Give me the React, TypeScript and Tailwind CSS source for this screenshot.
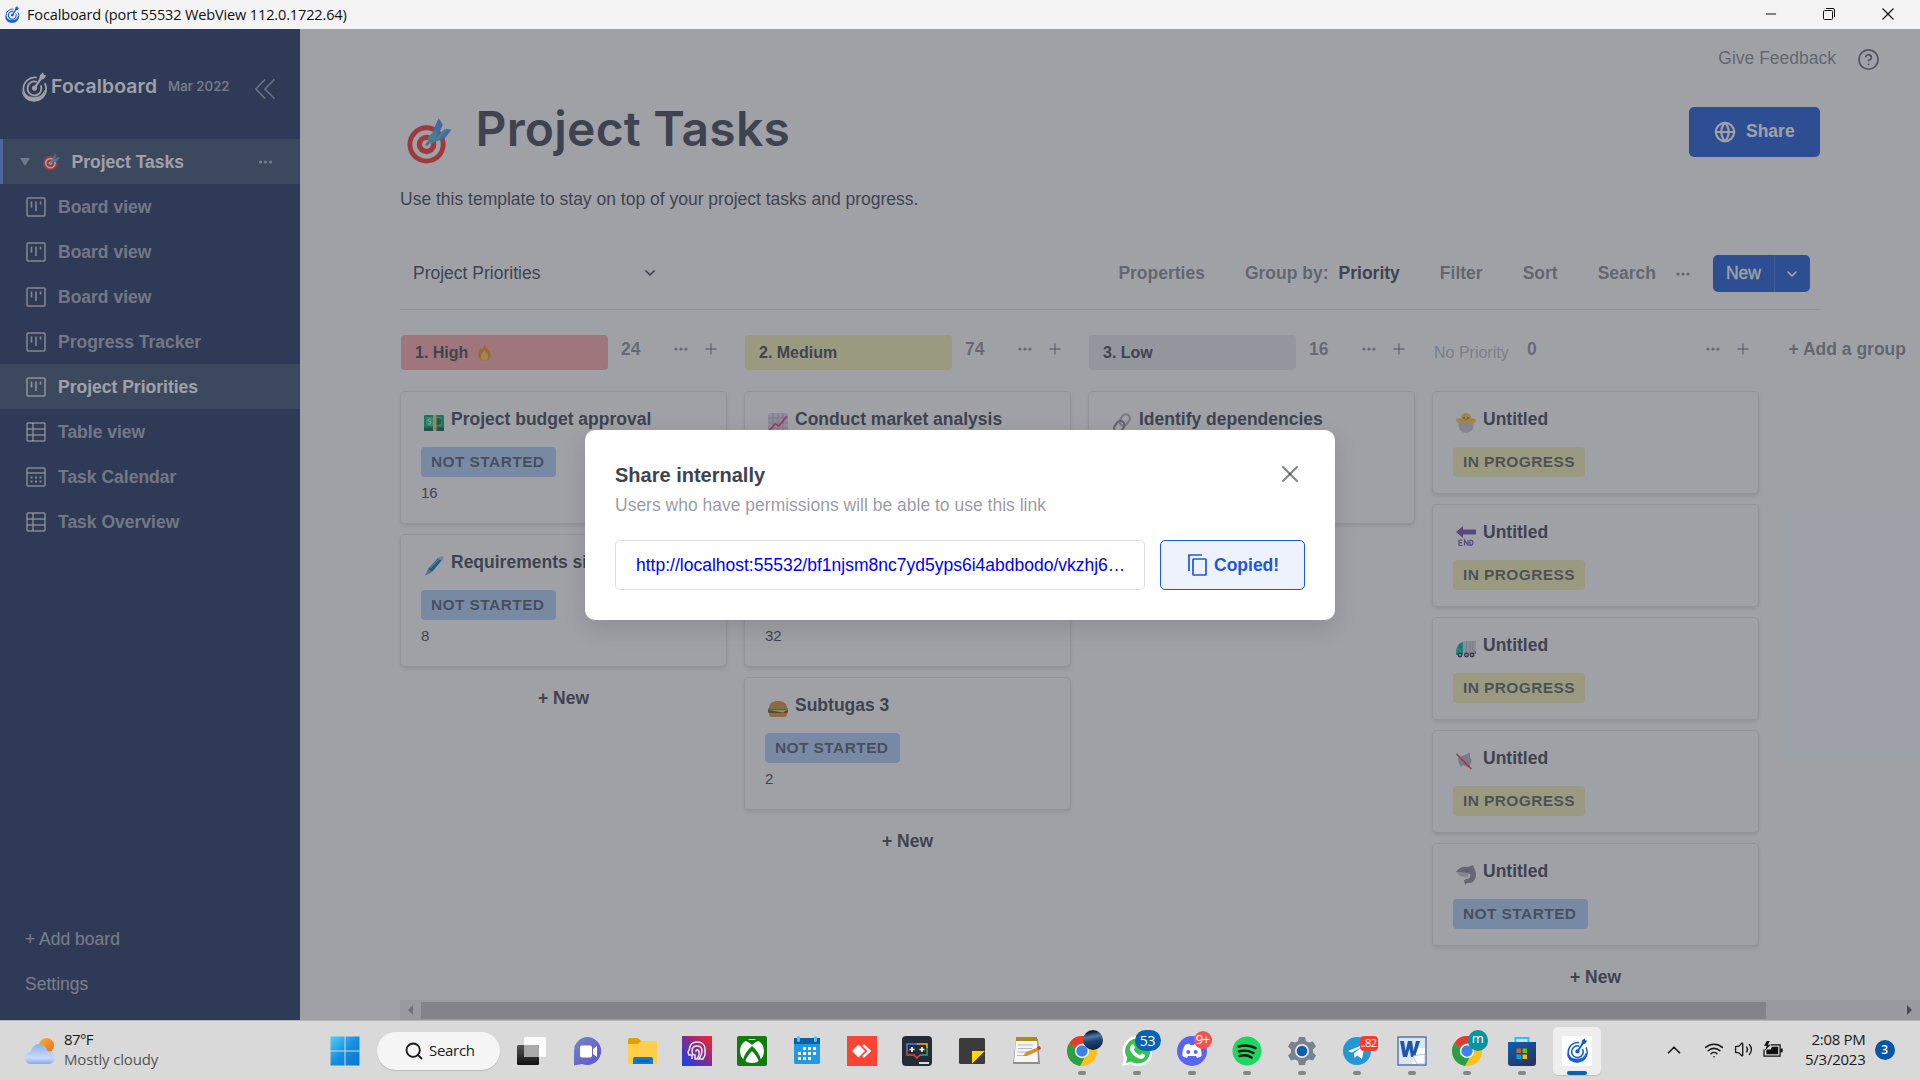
import React from "react";
import { HelpCircle, ChevronDown, ChevronUp, Globe, Search, Wifi, Volume2, X, Minus } from "lucide-react";

type IconProps = { className?: string };

function BrandMark({ className }: IconProps) {
  return (
    <svg viewBox="0 0 24 28" className={className} fill="none" stroke="currentColor">
      <path d="M14.500 5.200A10.600 10.600 0 1 0 22 10.500" strokeWidth="1.600" />
      <path d="M.6 15.500a11.500 11.500 0 0 0 22.900 0c.5 7.400-4.800 12.200-11.500 12.200S.1 22.800.6 15.500Z" fill="currentColor" stroke="none" />
      <path d="M2 17a10 8.500 0 0 0 20 0a10.500 9.500 0 0 1-20 0Z" fill="currentColor" strokeWidth=".6" />
      <path d="M14.600 9.200a6.500 6.500 0 1 0 3.700 3.300" strokeWidth="1.700" />
      <circle cx="12.500" cy="15" r="2.400" fill="currentColor" stroke="none" />
      <path d="M12.500 15 18.500 6" strokeWidth="2" />
      <path d="M17 7.500 17.500 3 20.500.200 21.200 2.600 23.500 3.200 21 6.500Z" fill="currentColor" stroke="none" />
    </svg>
  );
}

function DartEmoji({ className }: IconProps) {
  return (
    <svg viewBox="0 0 45 48" className={className}>
      <circle cx="19.500" cy="27" r="19.500" fill="#f8312f" />
      <circle cx="19.500" cy="27" r="14.500" fill="#fff" />
      <circle cx="19.500" cy="27" r="10" fill="#f8312f" />
      <circle cx="19.500" cy="27" r="4.500" fill="#fff" />
      <path d="m19 28 6-7" stroke="#7d8590" strokeWidth="2.500" />
      <path d="M27 11 32 0l4 7-5 12 9-8 5 1-7 9-9 3Z" fill="#4a90e6" />
      <path d="m21 20 7-8 3 3-2 5 9-9 2 2-9 10-6 3c-3 1-5-3-4-6Z" fill="#4fb9d8" />
    </svg>
  );
}

function BoardIcon({ className }: IconProps) {
  return (
    <svg viewBox="0 0 20 20" className={className} fill="none" stroke="currentColor" strokeWidth="1.500">
      <rect x="1" y="1" width="18" height="18" rx="1" />
      <path d="M5.500 4.500v6M10 4.500v9.500M14.500 4.500v3" strokeWidth="1.600" />
    </svg>
  );
}

function TableIcon({ className }: IconProps) {
  return (
    <svg viewBox="0 0 20 20" className={className} fill="none" stroke="currentColor" strokeWidth="1.500">
      <rect x="1" y="1" width="18" height="18" rx="1" />
      <path d="M7 1v18M1 7h18M1 13h18" />
    </svg>
  );
}

function CalendarIcon({ className }: IconProps) {
  return (
    <svg viewBox="0 0 20 20" className={className} fill="none" stroke="currentColor" strokeWidth="1.500">
      <rect x="1" y="1" width="18" height="18" rx="1" />
      <path d="M1 6h18" />
      <path d="M4.500 10.500h2M9 10.500h2M13.500 10.500h2M4.500 14.500h2M9 14.500h2M13.500 14.500h2" strokeWidth="2" />
    </svg>
  );
}

function Dots({ className }: IconProps) {
  return (
    <svg viewBox="0 0 14 4" className={className} fill="currentColor">
      <circle cx="2" cy="2" r="1.600" />
      <circle cx="7" cy="2" r="1.600" />
      <circle cx="12" cy="2" r="1.600" />
    </svg>
  );
}

function PlusThin({ className }: IconProps) {
  return (
    <svg viewBox="0 0 12 12" className={className} fill="none" stroke="currentColor" strokeWidth="1.300">
      <path d="M6 .500v11M.500 6h11" />
    </svg>
  );
}

/* ---------- card emoji ---------- */

function Emoji({ name }: { name: string }) {
  const c = "w-[20px] h-[20px] shrink-0";
  switch (name) {
    case "money":
      return (
        <svg viewBox="0 0 20 20" className={c}>
          <rect y="2" width="20" height="16" rx="1" fill="#00a86b" />
          <rect y="14.500" width="20" height="3.500" fill="#0d5e45" />
          <rect x="2" y="4" width="16" height="9" rx="2" fill="#17d492" />
          <circle cx="14" cy="8.500" r="3.500" fill="#0d6e50" />
          <path d="M6.500 6c-3-.5-3 2.500-.8 2.500S7.500 11.500 4 11" stroke="#fff" fill="none" />
          <rect x="9" y="2" width="3.500" height="16" fill="#f5c96b" />
        </svg>
      );
    case "pen":
      return (
        <svg viewBox="0 0 20 20" className={c}>
          <path d="M4 13 14 2l4 2L8 16Z" fill="#0074ba" />
          <path d="m14 2 3-2 3 1-2 4Z" fill="#b8c4d0" />
          <path d="m6 12 9-9" stroke="#6ec2f5" strokeWidth="1.100" />
          <path d="M4 13 8 16 1 20Z" fill="#8c95a3" />
        </svg>
      );
    case "chart":
      return (
        <svg viewBox="0 0 20 20" className={c}>
          <rect width="20" height="20" rx="2" fill="#e1d8ec" />
          <path d="M5 0v20M10 0v20M15 0v20M0 5h20M0 10h20M0 15h20" stroke="#bda9d6" strokeWidth="1" />
          <path d="M1 18 7 11l4 2L19 3" fill="none" stroke="#f82f60" strokeWidth="1.700" />
        </svg>
      );
    case "burger":
      return (
        <svg viewBox="0 0 20 20" className={c}>
          <path d="M1 9C1 4 5 2 10 2s9 2 9 7Z" fill="#e98b2e" />
          <rect y="9" width="20" height="2" fill="#7dbb42" />
          <rect y="10.500" width="20" height="3.500" rx="1.500" fill="#7d4533" />
          <path d="M1 11h18l-4 2.500Z" fill="#ffcf45" />
          <path d="M1 14h18c0 3-1 4-3 4H4c-2 0-3-1-3-4Z" fill="#e98b2e" />
        </svg>
      );
    case "link":
      return (
        <svg viewBox="0 0 20 20" className={c} fill="none" strokeWidth="2.200">
          <rect x="8.500" y=".500" width="8" height="12" rx="4" transform="rotate(35 12 7)" stroke="#b3b3b8" />
          <rect x="3" y="7.500" width="8" height="12" rx="4" transform="rotate(35 7 14)" stroke="#858289" />
        </svg>
      );
    case "chick":
      return (
        <svg viewBox="0 0 20 20" className={c}>
          <path d="M2.500 9h15c1 7-3 11-7.500 11s-8.500-4-7.500-11Z" fill="#c9c6ce" />
          <path d="M5 5C5 2 7 0 10 0s5 2 5 5l5 1c0 3-2 4-4 4l-3-1-3 3-3-3-3 1c-2 0-4-1-4-4Z" fill="#ffc83d" />
          <circle cx="8" cy="5" r=".8" fill="#402a32" />
          <circle cx="12" cy="5" r=".8" fill="#402a32" />
          <path d="M9 6h2l-1 1.500Z" fill="#f8312f" />
        </svg>
      );
    case "end":
      return (
        <svg viewBox="0 0 20 20" className={c}>
          <path d="M0 6 7 0v3.500h13v5H7V12Z" fill="#6f4fb0" />
          <path d="M6.500 14H3v5.500h3.500M3 16.700h3M8.500 19.500V14l3.500 5.500V14M14 14v5.500c4 0 4-5.500 0-5.500Z" fill="none" stroke="#6f4fb0" strokeWidth="1.200" />
        </svg>
      );
    case "truck":
      return (
        <svg viewBox="0 0 20 20" className={c}>
          <rect x="7" y="2" width="13" height="13" rx="1" fill="#d9d9de" />
          <path d="M10.500 2v12M14 2v12M17 2v12" stroke="#a9a9b2" strokeWidth=".8" />
          <path d="M0 14c0-5 2-10 7-11v13H0Z" fill="#00c68a" />
          <path d="M2 9c.5-2.500 1.500-4 4-4.500V9Z" fill="#2d7fd0" />
          <circle cx="4" cy="16" r="1.800" fill="#c8c8cc" stroke="#321b41" strokeWidth="1.300" />
          <circle cx="10.500" cy="16" r="1.800" fill="#c8c8cc" stroke="#321b41" strokeWidth="1.300" />
          <circle cx="16" cy="16" r="1.800" fill="#c8c8cc" stroke="#321b41" strokeWidth="1.300" />
          <rect x="18.800" y="12" width="1.200" height="3" fill="#f8312f" />
        </svg>
      );
    case "mute":
      return (
        <svg viewBox="0 0 20 20" className={c}>
          <path d="M2 7c0-1 1-2 2-2l9-4h1v5c2 .5 2 5 0 6v4h-1l-6-3-2 2-2-3Z" fill="#bbadc9" />
          <path d="m.500 2 15 15" stroke="#f8312f" strokeWidth="1.500" />
        </svg>
      );
    default:
      return (
        <svg viewBox="0 0 20 20" className={c}>
          <path d="M0 7c3-5 8-6 12-5l5-2 1 3c3 5 3 12-3 15l-4 0-2 2-1-5 2-1c4 0 5-3 4-5Z" fill="#8d8a92" />
          <path d="M1 8c4-1 8-1 10 0 2 2 1 4-1 4-4 0-7-1-9-4Z" fill="#c8c6cc" />
          <path d="M10 4v3M12 4v3" stroke="#5b5861" strokeWidth=".8" />
        </svg>
      );
  }
}

function Fire() {
  return (
    <svg viewBox="0 0 14 18" className="ml-[10px] h-[17px] w-[13px]">
      <path d="M7 0c1 4 6 6 6.500 11 .3 5-3 7-6.500 7S0 16 .5 11C.7 8 2 7 2.500 4 4 5 4.500 6 4.500 6 6 4 7 2 7 0Z" fill="#ff822d" />
      <path d="M7 6c1 3 4 4 4 8 0 2-2 4-4 4s-4-2-4-4c0-4 3-5 4-8Z" fill="#ffce43" />
    </svg>
  );
}

/* ---------- sidebar ---------- */

const views = [
  { label: "Board view", Icon: BoardIcon },
  { label: "Board view", Icon: BoardIcon },
  { label: "Board view", Icon: BoardIcon },
  { label: "Progress Tracker", Icon: BoardIcon },
  { label: "Project Priorities", Icon: BoardIcon, active: true },
  { label: "Table view", Icon: TableIcon },
  { label: "Task Calendar", Icon: CalendarIcon },
  { label: "Task Overview", Icon: TableIcon },
];

function Sidebar() {
  return (
    <aside className="flex w-[300px] shrink-0 flex-col bg-[#1e325c] pb-[13px] text-[17.5px] text-white">
      <div className="flex h-[110px] items-center pl-[21px]">
        <BrandMark className="mt-[5px] h-[30px] w-[26px]" />
        <span className="ml-[4px] mt-[6px] w-[106px] font-['Inter'] text-[19.300px] font-semibold leading-none tracking-[0.2px]">Focalboard</span>
        <span className="ml-[11px] mt-[6px] w-[61px] whitespace-nowrap font-['Inter'] text-[13.300px] font-medium leading-none text-white/65">Mar 2022</span>
        <svg viewBox="0 0 20 20" className="ml-[26px] mt-[10px] h-[20px] w-[20px] text-white/55" fill="none" stroke="currentColor" strokeWidth="1.500">
          <path d="M10 .500.800 10l9.200 9.500M19.300.500 10 10l9.300 9.500" />
        </svg>
      </div>
      <div className="flex h-[45px] items-center border-l-[3px] border-[#5d89ea] bg-[#384d6b] pl-[17px] font-bold">
        <svg viewBox="0 0 10 8" className="h-[8px] w-[10px] text-white/55">
          <path d="M0 0h10L5 8Z" fill="currentColor" />
        </svg>
        <DartEmoji className="ml-[13px] h-[18px] w-[17px]" />
        <span className="ml-[11.500px] mt-[2px]">Project Tasks</span>
        <Dots className="ml-auto mr-[27px] h-[4px] w-[15px] text-white/60" />
      </div>
      {views.map(({ label, Icon, active }, i) => (
        <div
          key={i}
          className={
            active
              ? "flex h-[45px] items-center bg-[#384d6b] pl-[26px] font-bold"
              : "flex h-[45px] items-center pl-[26px] font-bold text-white/60"
          }
        >
          <Icon className={active ? "h-[20px] w-[20px] text-white/80" : "h-[20px] w-[20px] text-white/75"} />
          <span className="ml-[12px] mt-[2px]">{label}</span>
        </div>
      ))}
      <div className="mt-auto flex h-[45px] items-center pl-[25px] text-white/65">+ Add board</div>
      <div className="flex h-[45px] items-center pl-[25px] text-white/65">Settings</div>
    </aside>
  );
}

/* ---------- board ---------- */

type Card = { emoji: string; title: string; status: "NOT STARTED" | "IN PROGRESS"; num?: string };
type Column = { name: string; count: string; chip?: string; fire?: boolean; cards: Card[] };

const columns: Column[] = [
  {
    name: "1. High",
    count: "24",
    chip: "bg-[#ffa9a9]",
    fire: true,
    cards: [
      { emoji: "money", title: "Project budget approval", status: "NOT STARTED", num: "16" },
      { emoji: "pen", title: "Requirements si", status: "NOT STARTED", num: "8" },
    ],
  },
  {
    name: "2. Medium",
    count: "74",
    chip: "bg-[#f5f1b0]",
    cards: [
      { emoji: "chart", title: "Conduct market analysis", status: "NOT STARTED", num: "" },
      { emoji: "chart", title: "", status: "NOT STARTED", num: "32" },
      { emoji: "burger", title: "Subtugas 3", status: "NOT STARTED", num: "2" },
    ],
  },
  {
    name: "3. Low",
    count: "16",
    chip: "bg-[#e9e9ea]",
    cards: [{ emoji: "link", title: "Identify dependencies", status: "NOT STARTED", num: "" }],
  },
  {
    name: "No Priority",
    count: "0",
    cards: [
      { emoji: "chick", title: "Untitled", status: "IN PROGRESS" },
      { emoji: "end", title: "Untitled", status: "IN PROGRESS" },
      { emoji: "truck", title: "Untitled", status: "IN PROGRESS" },
      { emoji: "mute", title: "Untitled", status: "IN PROGRESS" },
      { emoji: "shark", title: "Untitled", status: "NOT STARTED" },
    ],
  },
];

function CardView({ card }: { card: Card }) {
  return (
    <div
      className={
        (card.num !== undefined ? "h-[133px] " : "h-[103px] ") +
        "mb-[10px] flex w-[327px] flex-col items-start rounded-[5px] border border-[#e3e4e6] bg-white pl-[20px] pt-[16px] shadow-[0_2px_4px_rgba(0,0,0,0.12)]"
      }
    >
      <div className="flex h-[24px] items-center whitespace-nowrap text-[17.5px] font-bold">
        <span className="mt-[5px] flex w-[30px] pl-[2.500px]">
          <Emoji name={card.emoji} />
        </span>
        <span className="-mt-[1px]">{card.title}</span>
      </div>
      <span
        className={
          (card.status === "NOT STARTED" ? "w-[134.500px] bg-[#b1d1f6] " : "w-[132px] bg-[#f5f1b0] ") +
          "mt-[15px] flex h-[30px] items-center whitespace-nowrap rounded-[4px] pl-[10px] text-[15.500px] font-bold tracking-[0.400px] text-[#3f4350]/85"
        }
      >
        {card.status}
      </span>
      {card.num && <span className="mt-[6px] text-[15px] leading-[20px]">{card.num}</span>}
    </div>
  );
}

function ColumnView({ col }: { col: Column }) {
  return (
    <section className="w-[344px] shrink-0">
      <div className="flex h-[56px] items-start">
        {col.chip ? (
          <div className={col.chip + " ml-px flex h-[35px] w-[207px] items-center rounded-[4px] pl-[14px] text-[16px] font-bold"}>
            {col.name}
            {col.fire && <Fire />}
          </div>
        ) : (
          <div className="ml-[2px] flex h-[35px] w-[80px] items-center whitespace-nowrap text-[16px] text-[#3f4350]/40">{col.name}</div>
        )}
        <div className="flex h-[28px] flex-1 items-center text-[#3f4350]/60">
          <span className="ml-[13px] text-[17.5px] font-bold">{col.count}</span>
          <Dots className="ml-auto h-[4px] w-[14px]" />
          <PlusThin className="ml-[17px] mr-[27px] h-[12px] w-[12px]" />
        </div>
      </div>
      {col.cards.map((c, i) => (
        <CardView key={i} card={c} />
      ))}
      {col.cards.length !== 1 && (
        <div className="flex h-[42px] w-[327px] items-center justify-center text-[17.5px] font-bold">+ New</div>
      )}
    </section>
  );
}

function Main() {
  return (
    <main className="flex min-w-0 flex-1 flex-col bg-white text-[17.5px] text-[#3f4350]">
      <div className="flex h-[60px] items-center justify-end pr-[40px]">
        <span className="-mt-[2px] text-[#3f4350]/65">Give Feedback</span>
        <HelpCircle className="ml-[21px] h-[23px] w-[23px] text-[#3f4350]/80" strokeWidth={1.900} />
      </div>
      <div className="flex h-[220px] pl-[100px] pr-[100px]">
        <div className="flex-1">
          <div className="flex h-[80px]">
            <DartEmoji className="ml-[7px] mt-[29px] h-[47px] w-[45px]" />
            <h1 className="ml-[23.500px] mt-[11px] whitespace-nowrap font-['Inter'] text-[48px] font-semibold leading-[58px] tracking-[0.200px]">Project Tasks</h1>
          </div>
          <p className="mt-[19px] leading-[22px]">Use this template to stay on top of your project tasks and progress.</p>
          <div className="mt-[52px] flex h-[22px] items-center pl-[13px]">
            <span className="w-[229px]">Project Priorities</span>
            <ChevronDown className="h-[16px] w-[16px]" strokeWidth={2.600} />
          </div>
        </div>
        <div className="mt-[18px] flex h-[50px] w-[131px] items-center rounded-[5px] bg-[#1c58d9] pl-[25px] text-white">
          <Globe className="h-[22px] w-[22px]" strokeWidth={2.400} />
          <span className="ml-[10px] -mt-px font-bold">Share</span>
        </div>
      </div>
      <div className="mx-[100px] -mt-[66px] flex h-[67px] items-center justify-end border-b border-[#e0e1e3] pb-[5px] pr-[10px] font-bold text-[#3f4350]/65">
        <span>Properties</span>
        <span className="ml-[40px]">Group by:</span>
        <span className="ml-[10px] text-[#3f4350]">Priority</span>
        <span className="ml-[40px]">Filter</span>
        <span className="ml-[40px]">Sort</span>
        <span className="ml-[40px]">Search</span>
        <Dots className="ml-[20px] h-[4px] w-[14px]" />
        <div className="ml-[23px] flex h-[37px] w-[97px] items-center rounded-[5px] bg-[#1c58d9] font-medium text-white">
          <span className="flex h-full w-[62px] items-center justify-center border-r border-[#3f72e0] font-normal [-webkit-text-stroke:0.3px_white]">New</span>
          <ChevronDown className="ml-[9px] h-[16px] w-[16px]" strokeWidth={2.600} />
        </div>
      </div>
      <div className="flex min-h-0 flex-1 overflow-hidden pl-[100px] pt-[25px]">
        {columns.map((c) => (
          <ColumnView key={c.name} col={c} />
        ))}
        <div className="ml-[12.500px] flex h-[28px] items-center whitespace-nowrap font-bold text-[#3f4350]/65">+ Add a group</div>
      </div>
      <div className="ml-[100px] flex h-[20px] items-center justify-between bg-[#f1f1f1] pl-[8px] pr-[8px]">
        <svg viewBox="0 0 5 10" className="h-[10px] w-[5px]">
          <path d="M5 0v10L0 5Z" fill="#a3a3a3" />
        </svg>
        <div className="ml-[8px] h-[17px] w-[1345px] bg-[#c4c4c4]" />
        <svg viewBox="0 0 5 10" className="ml-auto h-[10px] w-[5px]">
          <path d="M0 0v10l5-5Z" fill="#505050" />
        </svg>
      </div>
    </main>
  );
}

function ShareDialog() {
  return (
    <div className="absolute inset-0 bg-[#3f4350]/50">
      <div className="ml-[585px] mt-[401px] h-[190px] w-[750px] rounded-[10px] bg-white px-[30px] pt-[32px] text-[#3f4350] shadow-[0_8px_24px_rgba(0,0,0,0.12)]">
        <div className="flex h-[26px] items-center justify-between text-[20px] font-bold">
          Share internally
          <X className="mr-[1px] -mt-[2px] h-[28px] w-[28px] text-[#3f4350]/65" strokeWidth={1.800} />
        </div>
        <p className="mt-[6px] text-[17.5px] leading-[22px] text-[#3f4350]/55">Users who have permissions will be able to use this link</p>
        <div className="mt-[24px] flex h-[50px] text-[17.5px]">
          <div className="flex w-[530px] items-center rounded-[5px] border border-[#dddee0] pl-[20px] text-[#0000ee]">
            http://localhost:55532/bf1njsm8nc7yd5yps6i4abdbodo/vkzhj6…
          </div>
          <div className="ml-[15px] flex w-[145px] items-center rounded-[5px] border border-[#1c58d9] bg-[#edf2fc] pl-[27px] font-bold text-[#1c58d9]">
            <svg viewBox="0 0 19 22" className="h-[22px] w-[19px]" fill="none" stroke="currentColor" strokeWidth="1.700">
              <path d="M1 17V1h13" />
              <rect x="5" y="5" width="13" height="16" rx=".5" />
            </svg>
            <span className="ml-[7px]">Copied!</span>
          </div>
        </div>
      </div>
    </div>
  );
}

/* ---------- taskbar ---------- */

function Svg({ children }: { children: React.ReactNode }) {
  return (
    <svg viewBox="0 0 30 30" className="h-[30px] w-[30px]">
      {children}
    </svg>
  );
}

function ChromeLogo() {
  return (
    <Svg>
      <circle cx="15" cy="15" r="15" fill="#fbc116" />
      <path d="M15 15 2 7.500A15 15 0 0 0 13 29.900L19.500 18Z" fill="#2c9f45" />
      <path d="M15 15 2 7.500A15 15 0 0 1 28 7.500H15Z" fill="#e33b2e" />
      <circle cx="15" cy="15" r="7.200" fill="#fff" />
      <circle cx="15" cy="15" r="5.700" fill="#3c82ee" />
    </Svg>
  );
}

const apps: { icon: React.ReactNode; badge?: React.ReactNode; running?: boolean; active?: boolean }[] = [
  {
    icon: (
      <Svg>
        <defs>
          <linearGradient id="tv" x2="0" y2="1"><stop stopColor="#555" /><stop offset="1" stopColor="#111" /></linearGradient>
        </defs>
        <rect x="0" y="9" width="22" height="20" rx="1.500" fill="url(#tv)" />
        <rect x="7" y="1" width="22" height="20" rx="1.500" fill="#fff" fillOpacity=".9" />
        <path d="M7 9h15v12H7Z" fill="#aaa" />
      </Svg>
    ),
  },
  {
    icon: (
      <Svg>
        <defs>
          <linearGradient id="chat" y2="1"><stop stopColor="#7b83c9" /><stop offset="1" stopColor="#5a54c8" /></linearGradient>
        </defs>
        <path d="M16 1a14 14 0 1 1-6 27l-8 1.500V15A14 14 0 0 1 16 1Z" fill="url(#chat)" />
        <rect x="8" y="9.500" width="12" height="12" rx="2" fill="#fff" />
        <path d="m21 13 4-3v11l-4-3Z" fill="#fff" />
      </Svg>
    ),
  },
  {
    icon: (
      <Svg>
        <path d="M1 4a2 2 0 0 1 2-2h8l3 3v6H1Z" fill="#dfa008" />
        <path d="M1 8h10l3-3h15a2 2 0 0 1 2 2v20a2 2 0 0 1-2 1H3a2 2 0 0 1-2-1Z" fill="#ffcf48" />
        <path d="M6 28v-5a2 2 0 0 1 2-2h16a2 2 0 0 1 2 2v5Z" fill="#1478cf" />
        <path d="M10 25h12" stroke="#0b4f93" strokeWidth="1.200" />
      </Svg>
    ),
  },
  {
    icon: (
      <Svg>
        <defs>
          <linearGradient id="pred" x1="0" y1="1" x2="1" y2="0"><stop stopColor="#1440f5" /><stop offset=".5" stopColor="#7a2f90" /><stop offset="1" stopColor="#ff2421" /></linearGradient>
        </defs>
        <path d="M0 0h30v30H0Z" fill="url(#pred)" />
        <path d="M10 23v-4H7l-1-3 1.500-3C8 8 11 6 15 6c5 0 8 3 8 7v6l-2 4h-4c2-3 3-5 3-8 0-3-2-5-5-5s-5 2-5 5c0 2 1 4 3 4v4h2c2-3 3-6 1.500-8.500-1-1.500-3-.5-2.500 1.500" fill="none" stroke="#f2e4f5" strokeWidth="1.500" />
      </Svg>
    ),
  },
  {
    icon: (
      <Svg>
        <rect width="30" height="30" rx="2" fill="#107c10" />
        <circle cx="15" cy="15" r="12" fill="#fff" />
        <path d="M7 5c3 0 6 2 8 4 2-2 5-4 8-4l-1-1H8ZM15 10c5 4 8 9 9 14l-2 2c-1-4-4-8-7-11-3 3-6 7-7 11l-2-2c1-5 4-10 9-14Z" fill="#107c10" />
      </Svg>
    ),
  },
  {
    icon: (
      <Svg>
        <rect x="2" y="2" width="26" height="26" rx="1.500" fill="#2398e3" />
        <path d="M2 2h26v6H2Z" fill="#0d5fae" />
        <rect x="5" width="3" height="6" rx="1.500" fill="#43c9f2" />
        <rect x="22" width="3" height="6" rx="1.500" fill="#43c9f2" />
        <path d="M11 11h3v3h-3ZM16 11h3v3h-3ZM21 11h3v3h-3ZM6 16h3v3H6ZM11 16h3v3h-3ZM16 16h3v3h-3ZM21 16h3v3h-3ZM6 21h3v3H6ZM11 21h3v3h-3ZM16 21h3v3h-3Z" fill="#fff" />
      </Svg>
    ),
  },
  {
    icon: (
      <Svg>
        <path d="M0 0h30v30H0Z" fill="#fb4336" />
        <path d="m11.500 8.500 6.500 6.500-6.500 6.500L5 15Z" fill="#fff" />
        <path d="m16 9 6.500 6-6.500 6" fill="none" stroke="#fff" strokeWidth="2.400" />
      </Svg>
    ),
  },
  {
    icon: (
      <Svg>
        <rect width="30" height="30" rx="4" fill="#262c36" />
        <g fill="none" strokeWidth="1.500">
          <path d="M5 15V8h10" stroke="#3a86e0" />
          <path d="M15 8h10v4" stroke="#f0b72a" />
          <path d="M25 12v7h-7" stroke="#32a852" />
          <path d="M18 19l-3 3-3-3H5v-5" stroke="#e8453c" />
        </g>
        <path d="M10 11v5M7.500 13.500h5M20 11v5M17.500 13.500h5" stroke="#fff" strokeWidth="1.500" />
        <path d="M17 27h10" stroke="#ddd" strokeWidth="2" />
      </Svg>
    ),
  },
  {
    icon: (
      <Svg>
        <rect x="2" y="2" width="26" height="26" rx="1.500" fill="#3b3b3b" />
        <path d="M15 28V15h13Z" fill="#ffd800" />
        <path d="M15 28 28 15v12l-1 1Z" fill="#3b3b3b" />
      </Svg>
    ),
  },
  {
    icon: (
      <Svg>
        <path d="M4 3h22l2 25H1Z" fill="#8e8e8e" />
        <path d="M4 4h21l1 22H2Z" fill="#f5f5f2" />
        <path d="M4 1h21v4H4Z" fill="#a88d1d" />
        <path d="M6 9h15M6 12.500h14M5.500 16h13M5 19.500h8" stroke="#b9b9c0" strokeWidth="1" />
        <path d="m11 20 3-4 13-5 1 3-13 6Z" fill="#d98d35" />
        <path d="m25 11 3-1 1 3-3 1Z" fill="#c1443c" />
      </Svg>
    ),
  },
  {
    icon: <ChromeLogo />,
    running: true,
    badge: <span className="absolute -right-[6px] -top-[6px] h-[20px] w-[20px] rounded-full bg-[linear-gradient(170deg,#10233f_15%,#4f79a3_35%,#1d4472_55%,#0b1c36)]" />,
  },
  {
    icon: (
      <Svg>
        <path d="M15.500 0a15 15 0 1 1-7 28L0 30l2.300-8A15 15 0 0 1 15.500 0Z" fill="#fff" />
        <path d="M15.500 2.500a12.500 12.500 0 1 1-6.500 23L4 27l1.300-5a12.500 12.500 0 0 1 10.200-19.500Z" fill="#3bc053" />
        <path d="M10 8.500c2-1 2 .5 3 3 .3 1-1.500 1.500-1 2.500 1 2 3 4 5.500 5 1 .5 2-2 3-1.500 3 1.500 3 1.500 2 3.500-1.500 2-4 2.500-6.500 1-4-1.500-6.500-4.500-8-8-.5-2 .5-4.500 2-5.500Z" fill="#fff" />
      </Svg>
    ),
    running: true,
    badge: <span className="absolute -right-[9px] -top-[6px] flex h-[21px] w-[26px] items-center justify-center rounded-full bg-[#0563b1] text-[14px] text-white">53</span>,
  },
  {
    icon: (
      <Svg>
        <circle cx="15" cy="15" r="15" fill="#5865f2" />
        <path d="M8 9c3-1.500 4-1.500 4.500-1l.5 1h4l.5-1c.5-.5 2-.5 4.500 1 2 3 3 7 2.500 11-2 1.500-4 2-4.500 2l-1-2h-8l-1 2c-.5 0-2.500-.5-4.500-2C5 16 6 12 8 9Z" fill="#fff" />
        <circle cx="11.300" cy="16" r="2" fill="#5865f2" />
        <circle cx="18.700" cy="16" r="2" fill="#5865f2" />
      </Svg>
    ),
    running: true,
    badge: <span className="absolute -right-[5px] -top-[5px] flex h-[18px] w-[18px] items-center justify-center rounded-full bg-[#f05353] text-[13px] tracking-tighter text-white">9+</span>,
  },
  {
    icon: (
      <Svg>
        <circle cx="15" cy="15" r="14.500" fill="#1fd760" />
        <path d="M6.500 10.500c6-1.800 12-1.200 17 1.600M7 15.500c5-1.500 10-1 14.500 1.500M7.500 20c4-1.200 8.500-.8 12 1.500" fill="none" stroke="#111" strokeWidth="2.400" strokeLinecap="round" />
      </Svg>
    ),
    running: true,
  },
  {
    icon: (
      <Svg>
        <path d="M12 1h6l1 4 3 1.500 4-1 3 5-3 3v3l3 3-3 5-4-1-3 1.500-1 4h-6l-1-4-3-1.500-4 1-3-5 3-3v-3l-3-3 3-5 4 1L11 5Z" fill="#7b828b" />
        <circle cx="15" cy="15" r="7" fill="#e4e8ec" />
        <circle cx="15" cy="15" r="5.300" fill="#0d5fb3" />
      </Svg>
    ),
    running: true,
  },
  {
    icon: (
      <Svg>
        <circle cx="15" cy="15" r="14" fill="#2497d6" />
        <path d="M6 15 23 8l-3 15-5-3.500-2.500 2.500-.5-4.500 7-6-9 5Z" fill="#fff" />
      </Svg>
    ),
    running: true,
    badge: <span className="absolute -right-[6px] top-0 flex h-[15px] w-[18px] items-center justify-center rounded-[4px] bg-[#f23c34] text-[11px] tracking-tighter text-white">..82</span>,
  },
  {
    icon: (
      <Svg>
        <path d="M1 1h28v28H1Z" fill="#dbe6f5" stroke="#5873a8" strokeWidth="1.400" />
        <path d="M18 12h10v16H15Z" fill="#fff" />
        <path d="M3 5h4l1.500 10L11 5h4l1.500 10L19 5h4l-5 16h-4l-1.500-8.500L10 21H6Z" fill="#1f56a8" />
        <path d="m16 20 12-2v10h-8Z" fill="#f7faff" stroke="#9fb3d6" strokeWidth=".7" />
      </Svg>
    ),
    running: true,
  },
  {
    icon: <ChromeLogo />,
    running: true,
    badge: <span className="absolute -right-[6px] -top-[6px] flex h-[21px] w-[20px] items-center justify-center rounded-full bg-[#07959f] pb-[2px] text-[13px] text-white">m</span>,
  },
  {
    icon: (
      <Svg>
        <defs>
          <linearGradient id="store" x2=".7" y2="1"><stop stopColor="#0a62b4" /><stop offset="1" stopColor="#273460" /></linearGradient>
        </defs>
        <path d="M8.500 7V2h13v5" fill="none" stroke="#38bdf2" strokeWidth="2" />
        <path d="M1 6h28v21a3 3 0 0 1-3 3H4a3 3 0 0 1-3-3Z" fill="url(#store)" />
        <path d="M9.500 12.500H14V17H9.500Z" fill="#f05025" />
        <path d="M15.500 12.500H20V17h-4.500Z" fill="#7fba00" />
        <path d="M9.500 18.500H14V23H9.500Z" fill="#00a4ef" />
        <path d="M15.500 18.500H20V23h-4.500Z" fill="#ffb900" />
      </Svg>
    ),
    running: true,
  },
  {
    icon: (
      <span className="flex h-[30px] w-[30px] items-center justify-center bg-white">
        <BrandMark className="h-[25px] w-[22px] text-[#0f5bd3]" />
      </span>
    ),
    active: true,
  },
];

function Taskbar() {
  return (
    <footer className="flex h-[60px] items-center border-t border-[#b5b5b8] bg-[#d9d9d9] font-['Open_Sans'] text-[15px] tracking-[-0.3px] text-[#1a1a1a]">
      <div className="flex w-[329.500px] items-center pl-[25px]">
        <svg viewBox="0 0 30 26" className="h-[26px] w-[30px]">
          <defs>
            <linearGradient id="sun" x2="1" y2="1"><stop stopColor="#f5b52e" /><stop offset="1" stopColor="#f2661b" /></linearGradient>
            <linearGradient id="cloud" x2="0" y2="1"><stop stopColor="#8fb1ee" /><stop offset=".7" stopColor="#c9daf8" /><stop offset="1" stopColor="#86a9ea" /></linearGradient>
          </defs>
          <circle cx="21.500" cy="7.500" r="7.500" fill="url(#sun)" />
          <path d="M6 26a6 6 0 0 1-.5-12C7 9 10 6 14 6c5 0 7 3 8.500 7 5 0 7.500 3 7.500 6.500S27 26 24 26Z" fill="url(#cloud)" />
        </svg>
        <div className="-mt-[4px] ml-[9px] leading-[20px]">
          <div className="tracking-[-0.600px]">87°F</div>
          <div className="tracking-[-0.150px] text-[#555]">Mostly cloudy</div>
        </div>
      </div>
      <svg viewBox="0 0 30 30" className="h-[30px] w-[30px]">
        <defs>
          <linearGradient id="win" gradientUnits="userSpaceOnUse" x2="30" y2="30"><stop stopColor="#50d2fb" /><stop offset=".5" stopColor="#1590e0" /><stop offset="1" stopColor="#0873cf" /></linearGradient>
        </defs>
        <path d="M.500.500h14v14h-14ZM15.500.500h14v14h-14ZM.500 15.500h14v14h-14ZM15.500 15.500h14v14h-14Z" fill="url(#win)" />
      </svg>
      <div className="ml-[17.500px] flex h-[38px] w-[123px] items-center rounded-full bg-[#f5f5f5] pl-[27px] shadow-[0_1px_1px_rgba(0,0,0,0.15)]">
        <Search className="h-[20px] w-[20px]" strokeWidth={2.200} />
        <span className="ml-[5px]">Search</span>
      </div>
      <div className="ml-[4px] flex">
        {apps.map((a, i) => (
          <div key={i} className="flex w-[55px] justify-center">
            <div
              className={
                a.active
                  ? "flex h-[48px] w-[48px] flex-col items-center justify-between rounded-[5px] bg-[#eee] pt-[9px] shadow-[0_1px_1px_rgba(0,0,0,0.12)]"
                  : "flex h-[48px] w-[48px] flex-col items-center justify-between pt-[9px]"
              }
            >
              <div className="relative">
                {a.icon}
                {a.badge}
              </div>
              {a.active && <span className="h-[4px] w-[20px] rounded-full bg-[#0563b1]" />}
              {a.running && <span className="h-[4px] w-[8px] rounded-full bg-[#858585]" />}
            </div>
          </div>
        ))}
      </div>
      <div className="flex flex-1 items-center pb-[2px]">
        <ChevronUp className="ml-[59px] h-[22px] w-[22px]" strokeWidth={1.900} />
        <Wifi className="ml-[19px] h-[20px] w-[20px]" strokeWidth={1.900} />
        <Volume2 className="ml-[10px] h-[19px] w-[19px]" strokeWidth={1.700} />
        <svg viewBox="0 0 21 18" className="ml-[10px] h-[17px] w-[20px]" fill="none" stroke="#111" strokeWidth="1.300">
          <path d="M8 4h10v12H1V9" />
          <path d="M3.500 9H8l1.500-3H16v8H3.500Z" fill="#111" stroke="none" />
          <path d="M19.500 8v4" strokeWidth="2.500" />
          <path d="M4 0 1 5h3L2 10l6-6H5l2-4Z" fill="#111" stroke="none" />
        </svg>
        <div className="-mt-[2px] w-[82.500px] whitespace-nowrap text-right leading-[20px]">
          <div>2:08 PM</div>
          <div className="tracking-[-0.250px]">5/3/2023</div>
        </div>
        <span className="ml-[9px] flex h-[20px] w-[20px] items-center justify-center rounded-full bg-[#0757a4] text-[12px] font-semibold text-white">3</span>
      </div>
    </footer>
  );
}

export default function App() {
  return (
    <div className="flex h-[1080px] w-[1920px] flex-col overflow-hidden font-['Liberation_Sans',sans-serif]">
      <header className="flex h-[29px] shrink-0 items-center bg-[#f3f3f3] pl-[4px] pr-[26px] font-['Open_Sans'] text-[14px] text-[#111]">
        <BrandMark className="h-[17px] w-[16px] text-[#0f5bd3]" />
        <span className="ml-[7px] whitespace-nowrap text-[14.500px] tracking-[-0.130px]">Focalboard (port 55532 WebView 112.0.1722.64)</span>
        <Minus className="ml-auto -mt-[2px] h-[16px] w-[16px]" strokeWidth={1.500} />
        <svg viewBox="0 0 12 12" className="-mt-px ml-[44px] h-[12px] w-[12px]" fill="none" stroke="#111" strokeWidth="1">
          <rect x=".5" y="2.500" width="9" height="9" rx="1" />
          <path d="M3 .500h7a1.500 1.500 0 0 1 1.500 1.500v7" />
        </svg>
        <svg viewBox="0 0 12 12" className="-mt-px ml-[47px] h-[12px] w-[12px]" fill="none" stroke="#111" strokeWidth="1.200">
          <path d="m.500.500 11 11m0-11-11 11" />
        </svg>
      </header>
      <div className="relative flex h-[991px]">
        <Sidebar />
        <Main />
        <ShareDialog />
      </div>
      <Taskbar />
    </div>
  );
}
